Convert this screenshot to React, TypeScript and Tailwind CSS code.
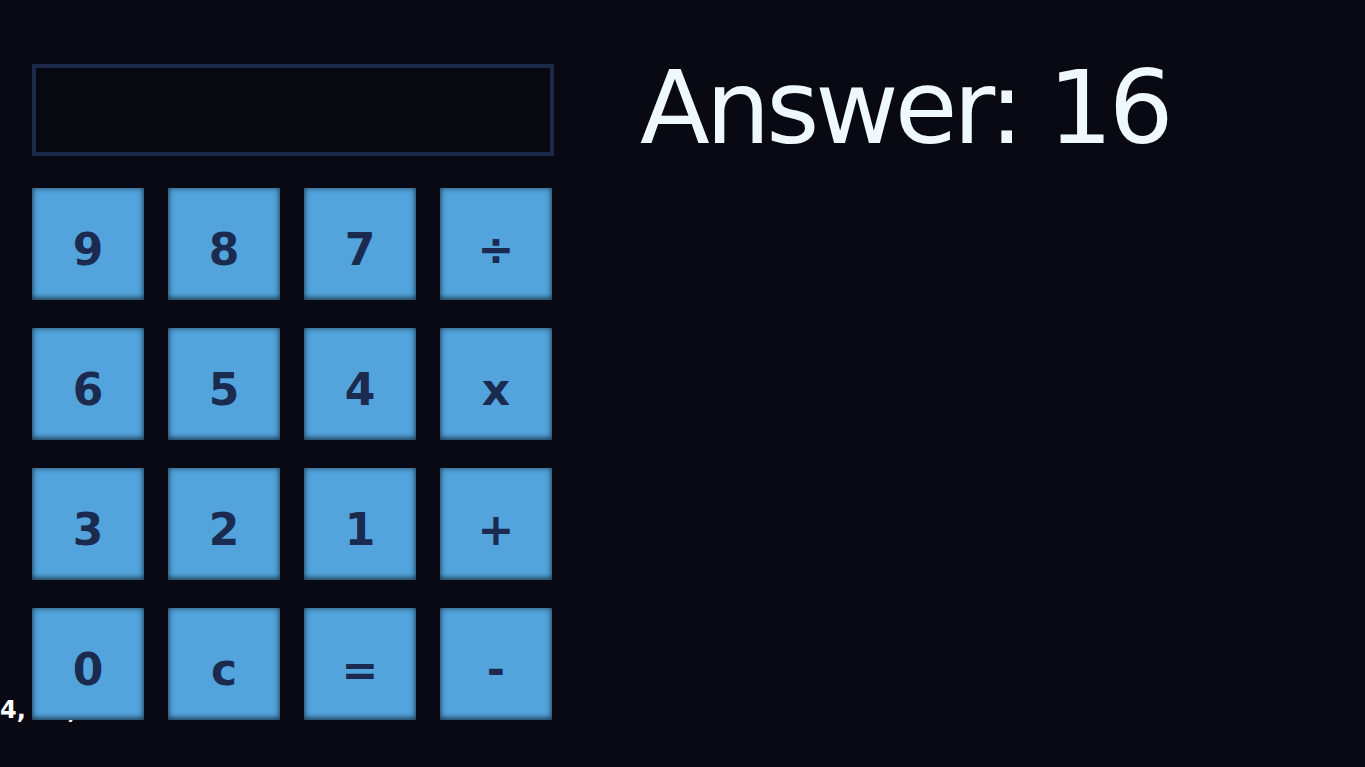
import React from "react";

const keys = ["9", "8", "7", "÷", "6", "5", "4", "x", "3", "2", "1", "+", "0", "c", "=", "-"];

const CalcButton: React.FC<{ label: string }> = ({ label }) => (
    <button className="w-[112px] h-[112px] pt-3 bg-[#53a4dd] text-[#1b2a4f] text-[44px] font-semibold flex items-center justify-center shadow-[inset_0_0_6px_rgba(0,0,0,0.55),inset_0_-3px_5px_rgba(0,0,0,0.35)]">
        {label}
    </button>
);

export default function App() {
    return (
        <div className="relative min-h-[767px] w-full bg-[#080912] overflow-hidden" style={{ fontFamily: '"DejaVu Sans", sans-serif' }}>
            <div className="absolute left-0 top-[692px] text-white text-[24px] font-semibold z-0">4, 12, 16</div>
            <div className="relative z-10 flex">
                <div className="pl-8 pt-16 w-[600px]">
                    <div className="w-[522px] h-[92px] border-4 border-[#1b2a4a] bg-[#070810]"></div>
                    <div className="mt-8 grid grid-cols-[repeat(4,112px)] gap-x-6 gap-y-7">
                        {keys.map((k, i) => (
                            <CalcButton key={i} label={k} />
                        ))}
                    </div>
                </div>
                <div className="pl-10 pt-[57px]">
                    <h1 className="text-[#eef8fd] text-[102px] font-medium leading-none tracking-[-0.04em]">Answer: 16</h1>
                </div>
            </div>
        </div>
    );
}
